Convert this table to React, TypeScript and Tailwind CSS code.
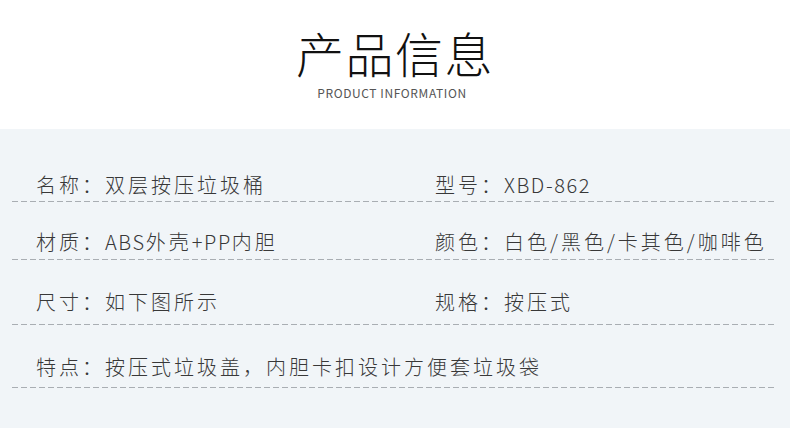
const cjk = "font-['Noto_Sans_CJK_SC','Noto_Sans',sans-serif]";

const rows = [
  { left: "名称：双层按压垃圾桶", right: "型号：XBD-862", pad: "pt-[42px]", gap: "mt-[2px]" },
  { left: "材质：ABS外壳+PP内胆", right: "颜色：白色/黑色/卡其色/咖啡色", pad: "pt-[26px]", gap: "mt-[3px]" },
  { left: "尺寸：如下图所示", right: "规格：按压式", pad: "pt-[28px]", gap: "mt-[8px]" },
  { left: "特点：按压式垃圾盖，内胆卡扣设计方便套垃圾袋", right: "", pad: "pt-[28px]", gap: "mt-[6px]" },
];

// latin runs are set tighter than the chinese ones
function Text({ value }: { value: string }) {
  return (
    <>
      {value.split(/([A-Za-z0-9+\-]+)/).map((part, i) =>
        i % 2 === 1 ? (
          <span key={i} className="tracking-[1.6px]">{part}</span>
        ) : (
          <span key={i}>{part}</span>
        )
      )}
    </>
  );
}

function Row({ left, right, pad, gap }: { left: string; right: string; pad: string; gap: string }) {
  return (
    <div className={pad}>
      <div className="flex pl-[24px] text-[20px] leading-[28px] tracking-[3px] text-[#383838] font-light whitespace-nowrap">
        <div className="w-[399px] shrink-0"><Text value={left} /></div>
        <div><Text value={right} /></div>
      </div>
      <div className={`${gap} h-px bg-[repeating-linear-gradient(to_right,#a9aeb3_0_6px,transparent_6px_9px)]`} />
    </div>
  );
}

export default function App() {
  return (
    <div className={`w-[790px] h-[446px] bg-white ${cjk}`}>
      {/* Header */}
      <div className="h-[129px] flex flex-col items-center">
        <h1 className="mt-[28px] text-[48px] leading-[48px] tracking-[1.5px] font-light text-[#111]">产品信息</h1>
        <p className="mt-[9px] mr-[6px] text-[12px] leading-[16px] tracking-[0.6px] text-[#555]">PRODUCT INFORMATION</p>
      </div>

      {/* Info panel */}
      <div className="bg-[#f1f5f8] px-[12px] pb-[40px] w-[790px]">
        <div className="w-[762px]">
          {rows.map((r, i) => (
            <Row key={i} {...r} />
          ))}
        </div>
      </div>
    </div>
  );
}
